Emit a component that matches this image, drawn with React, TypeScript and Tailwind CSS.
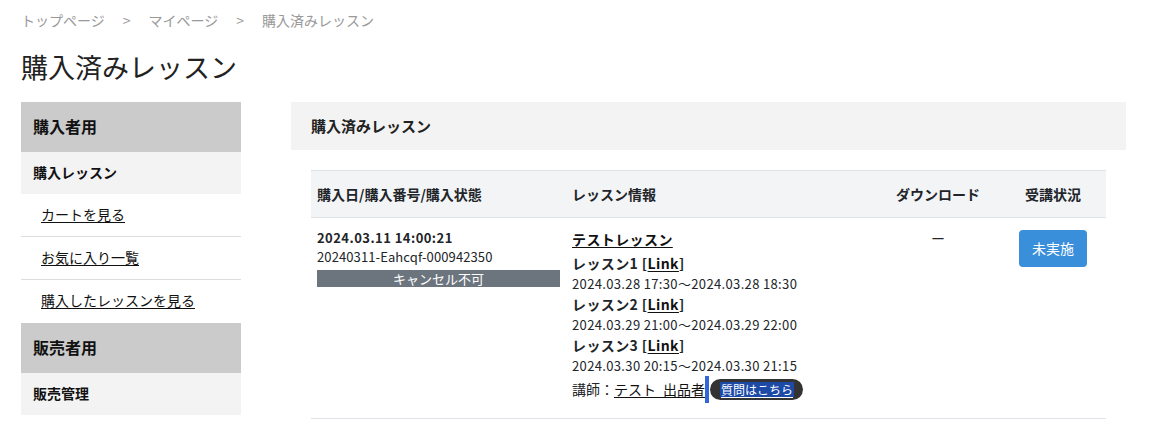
import React from 'react';

const font = { fontFamily: '"Noto Sans CJK JP", "Noto Sans", sans-serif' };

const lessons = [
  { name: 'レッスン1', time: '2024.03.28 17:30〜2024.03.28 18:30' },
  { name: 'レッスン2', time: '2024.03.29 21:00〜2024.03.29 22:00' },
  { name: 'レッスン3', time: '2024.03.30 20:15〜2024.03.30 21:15' },
];

const Sidebar = () => (
  <aside className="w-[220px] shrink-0 text-[#111]">
    <div className="h-[50px] bg-[#cbcbcb] pl-3 pb-[3px] flex items-center text-[16px] font-bold">購入者用</div>
    <div className="h-[42px] bg-[#f3f3f3] pl-3 pb-[2px] flex items-center text-[14px] font-bold">購入レッスン</div>
    {['カートを見る', 'お気に入り一覧', '購入したレッスンを見る'].map((l, i) => (
      <div
        key={l}
        className={`h-[43px] pl-5 pb-[2px] flex items-center text-[14px] ${i < 2 ? 'border-b border-[#dddddd]' : ''}`}
      >
        <a href="#" className="underline underline-offset-2 text-[#111]">{l}</a>
      </div>
    ))}
    <div className="h-[50px] bg-[#cbcbcb] pl-3 pb-[3px] flex items-center text-[16px] font-bold">販売者用</div>
    <div className="h-[42px] bg-[#f3f3f3] pl-3 pb-[2px] flex items-center text-[14px] font-bold">販売管理</div>
  </aside>
);

export default function App() {
  return (
    <div className="w-[1155px] h-[431px] overflow-hidden bg-white text-[#212529]" style={font}>
      <div className="pl-[21px] pr-[29px]">
        {/* Breadcrumb */}
        <div className="h-[40px] flex items-center gap-[18px] text-[14px] text-[#999]">
          <span>トップページ</span>
          <span>&gt;</span>
          <span>マイページ</span>
          <span>&gt;</span>
          <span>購入済みレッスン</span>
        </div>
        <h1 className="h-[62px] pt-[3px] text-[27px] font-normal text-[#222] leading-[48px]">購入済みレッスン</h1>

        <div className="flex">
          <Sidebar />

          <main className="flex-1 ml-[50px]">
            <div className="h-[48px] bg-[#f3f3f3] pl-5 flex items-center text-[15px] font-bold text-[#222]">
              購入済みレッスン
            </div>

            <div className="px-5 pt-5">
              <table className="w-full border-collapse text-[14px] table-fixed">
                <colgroup>
                  <col className="w-[255px]" />
                  <col className="w-[304px]" />
                  <col className="w-[130px]" />
                  <col className="w-[106px]" />
                </colgroup>
                <thead>
                  <tr className="h-[47px] bg-[#f3f4f6] border-t border-b border-[#dee2e6]">
                    <th className="px-1.5 text-left font-semibold">購入日/購入番号/購入状態</th>
                    <th className="px-1.5 text-left font-semibold">レッスン情報</th>
                    <th className="pl-3 pr-1.5 text-center font-semibold">ダウンロード</th>
                    <th className="px-1.5 text-center font-semibold">受講状況</th>
                  </tr>
                </thead>
                <tbody>
                  <tr className="border-b border-[#dee2e6] align-top">
                    <td className="px-1.5 pt-[10px] pb-[15px]">
                      <div className="text-[13px] font-bold leading-[20px] tracking-[0.45px]">2024.03.11 14:00:21</div>
                      <div className="text-[13px] leading-[18px] tracking-[0.1px]">20240311-Eahcqf-000942350</div>
                      <div className="mt-[4px] h-[17px] w-[243px] bg-[#6c757d] text-white text-[13px] leading-[17px] text-center">
                        キャンセル不可
                      </div>
                    </td>
                    <td className="px-1.5 pt-[11px] pb-[15px]">
                      <a href="#" className="block mb-[3px] text-[14px] font-semibold underline underline-offset-2 leading-[21px] text-[#111] w-fit tracking-[0.4px]">
                        テストレッスン
                      </a>
                      {lessons.map((l) => (
                        <div key={l.name}>
                          <div className="text-[14px] font-bold leading-[21px] tracking-[0.4px]">
                            {l.name} [<a href="#" className="underline underline-offset-2 text-[#111]">Link</a>]
                          </div>
                          <div className="text-[13px] leading-[20px] tracking-[0.35px]">{l.time}</div>
                        </div>
                      ))}
                      <div className="flex items-center text-[14px] h-[27px]">
                        <span>講師：</span>
                        <a href="#" className="underline underline-offset-2 text-[#111]">テスト{'\u2002'}出品者</a>
                        <span className="w-[4px] h-[27px] bg-[#3367d6]" />
                        <span className="ml-[1px] h-[21px] pl-[10px] pr-[9px] rounded-full bg-[#333] flex items-center">
                          <span className="bg-[#1c4aa6] text-white text-[12px] underline underline-offset-2 leading-[15px] px-[1px]">
                            質問はこちら
                          </span>
                        </span>
                      </div>
                    </td>
                    <td className="pl-3 pr-1.5 pt-[10px] text-center text-[14px]">ー</td>
                    <td className="px-1.5 pt-[12px] text-center">
                      <button className="h-[37px] px-[13px] rounded-[4px] bg-[#3a8fdb] text-white text-[14px]">
                        未実施
                      </button>
                    </td>
                  </tr>
                </tbody>
              </table>
            </div>
          </main>
        </div>
      </div>
    </div>
  );
}
